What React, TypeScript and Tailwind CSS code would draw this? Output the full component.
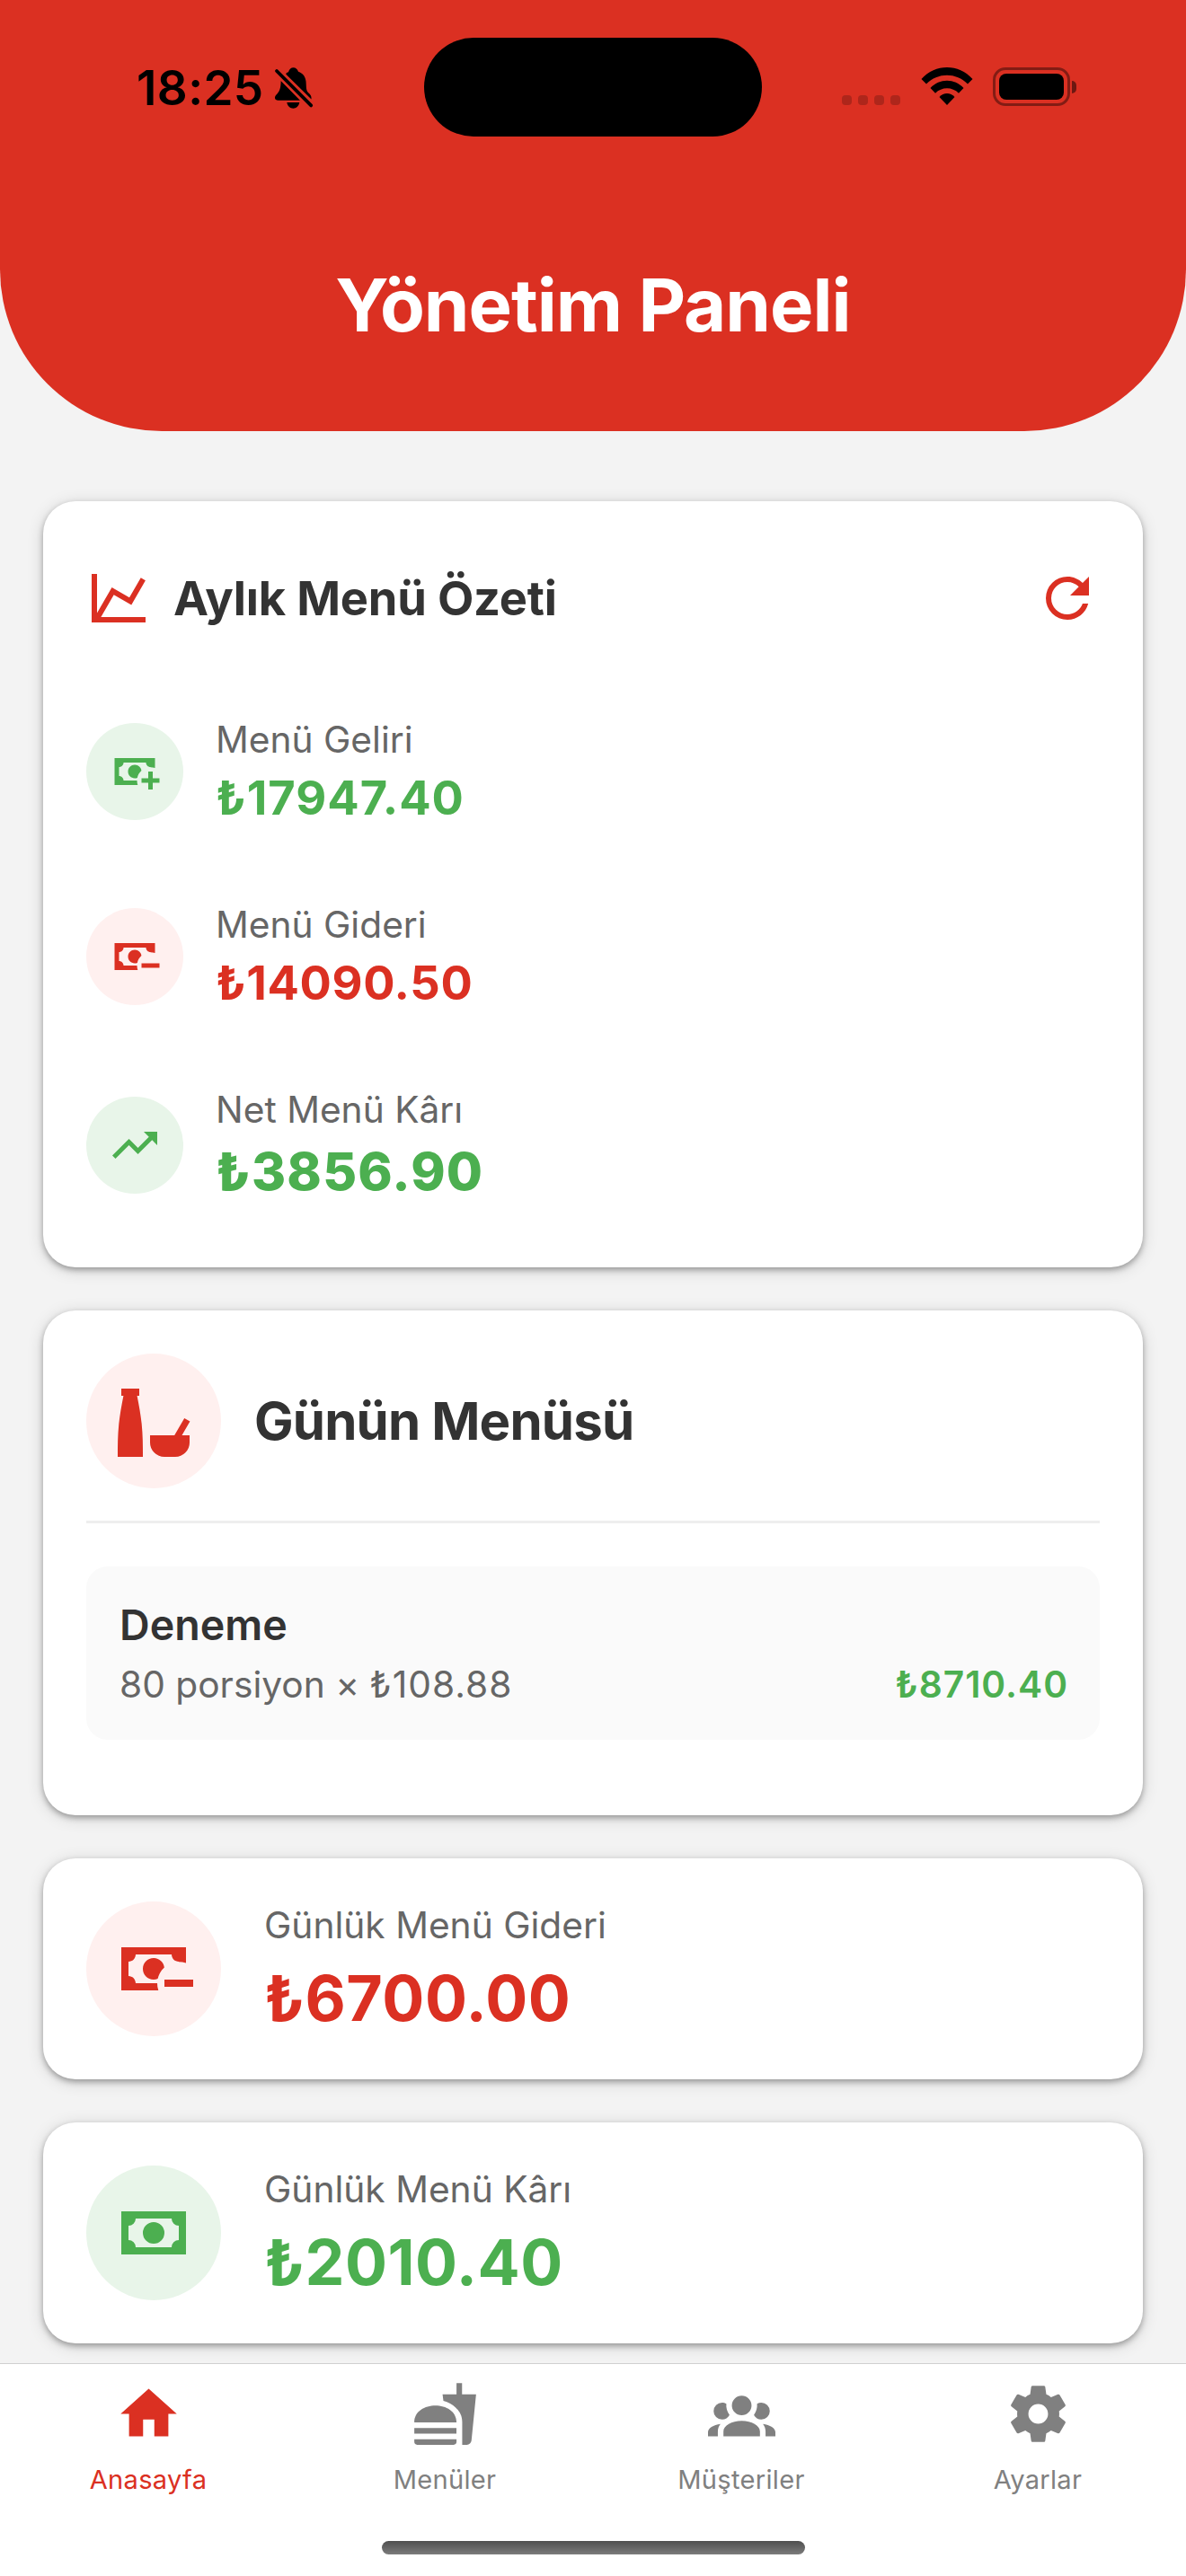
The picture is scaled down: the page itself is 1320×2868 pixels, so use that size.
import type { ReactNode } from "react";

const ICONS = {
  chart: "M16,11.78L20.24,4.45L21.97,5.45L16.74,14.5L10.23,10.75L5.46,19H22V21H2V3H4V17.54L9.5,8L16,11.78Z",
  refresh:
    "M17.65,6.35C16.2,4.9 14.21,4 12,4A8,8 0 0,0 4,12A8,8 0 0,0 12,20C15.73,20 18.84,17.45 19.73,14H17.65C16.83,16.33 14.61,18 12,18A6,6 0 0,1 6,12A6,6 0 0,1 12,6C13.66,6 15.14,6.69 16.22,7.78L13,11H20V4L17.65,6.35Z",
  cashPlus:
    "M15 15V17H18V20H20V17H23V15H20V12H18V15M14.97 11.61C14.85 10.28 13.59 8.97 12 9C10.3 9.03 9 10.3 9 12C9 13.7 10.3 14.94 12 15C12.38 15 12.77 14.92 13.14 14.77C13.41 13.67 13.86 12.63 14.97 11.61M13 16H7C7 14.9 6.1 14 5 14V10C6.1 10 7 9.1 7 8H17C17 9.1 17.9 10 19 10V10.06C19.67 10.06 20.34 10.18 21 10.4V6H3V18H13.32C13.1 17.33 13 16.66 13 16Z",
  cashMinus:
    "M15 15V17H23V15M14.97 11.61C14.85 10.28 13.59 8.97 12 9C10.3 9.03 9 10.3 9 12C9 13.7 10.3 14.94 12 15C12.38 15 12.77 14.92 13.14 14.77C13.41 13.67 13.86 12.63 14.97 11.61M13 16H7C7 14.9 6.1 14 5 14V10C6.1 10 7 9.1 7 8H17C17 9.1 17.9 10 19 10V10.06C19.67 10.06 20.34 10.18 21 10.4V6H3V18H13.32C13.1 17.33 13 16.66 13 16Z",
  cash: "M3,6H21V18H3V6M12,9A3,3 0 0,1 15,12A3,3 0 0,1 12,15A3,3 0 0,1 9,12A3,3 0 0,1 12,9M7,8A2,2 0 0,1 5,10V14A2,2 0 0,1 7,16H17A2,2 0 0,1 19,14V10A2,2 0 0,1 17,8H7Z",
  trending:
    "M16,6L18.29,8.29L13.41,13.17L9.41,9.17L2,16.59L3.41,18L9.41,12L13.41,16L19.71,9.71L22,12V6H16Z",
  bottleBowl:
    "M22,18A4,4 0 0,1 18,22H15A4,4 0 0,1 11,18V16H17.79L20.55,11.23L22.11,12.13L19.87,16H22V18M9,22H2C2,19 2,16 2.33,12.83C2.6,10.3 3.08,7.66 3.6,5H3V3H4L7,3H8V5H7.4C7.92,7.66 8.4,10.3 8.67,12.83C9,16 9,19 9,22Z",
  home: "M10,20V14H14V20H19V12H22L12,3L2,12H5V20H10Z",
  food: "M18.06 23H19.72C20.56 23 21.25 22.35 21.35 21.53L23 5.05H18V1H16.03V5.05H11.06L11.36 7.39C13.07 7.86 14.67 8.71 15.63 9.65C17.07 11.07 18.06 12.54 18.06 14.94V23M1 22V21H16.03V22C16.03 22.54 15.58 23 15 23H2C1.45 23 1 22.54 1 22M16.03 15C16.03 7 1 7 1 15H16.03M1 17H16V19H1V17Z",
  group:
    "M12,5.5A3.5,3.5 0 0,1 15.5,9A3.5,3.5 0 0,1 12,12.5A3.5,3.5 0 0,1 8.5,9A3.5,3.5 0 0,1 12,5.5M5,8C5.56,8 6.08,8.15 6.53,8.42C6.38,9.85 6.8,11.27 7.66,12.38C7.16,13.34 6.16,14 5,14A3,3 0 0,1 2,11A3,3 0 0,1 5,8M19,8A3,3 0 0,1 22,11A3,3 0 0,1 19,14C17.84,14 16.84,13.34 16.34,12.38C17.2,11.27 17.62,9.85 17.47,8.42C17.92,8.15 18.44,8 19,8M5.5,18.25C5.5,16.18 8.41,14.5 12,14.5C15.59,14.5 18.5,16.18 18.5,18.25V20H5.5V18.25M0,20V18.5C0,17.11 1.89,15.94 4.45,15.6C3.86,16.28 3.5,17.22 3.5,18.25V20H0M24,20H20.5V18.25C20.5,17.22 20.14,16.28 19.55,15.6C22.11,15.94 24,17.11 24,18.5V20Z",
  cog: "M12,15.5A3.5,3.5 0 0,1 8.5,12A3.5,3.5 0 0,1 12,8.5A3.5,3.5 0 0,1 15.5,12A3.5,3.5 0 0,1 12,15.5M19.43,12.97C19.47,12.65 19.5,12.33 19.5,12C19.5,11.67 19.47,11.34 19.43,11L21.54,9.37C21.73,9.22 21.78,8.95 21.66,8.73L19.66,5.27C19.54,5.05 19.27,4.96 19.05,5.05L16.56,6.05C16.04,5.66 15.5,5.32 14.87,5.07L14.5,2.42C14.46,2.18 14.25,2 14,2H10C9.75,2 9.54,2.18 9.5,2.42L9.13,5.07C8.5,5.32 7.96,5.66 7.44,6.05L4.95,5.05C4.73,4.96 4.46,5.05 4.34,5.27L2.34,8.73C2.21,8.95 2.27,9.22 2.46,9.37L4.57,11C4.53,11.34 4.5,11.67 4.5,12C4.5,12.33 4.53,12.65 4.57,12.97L2.46,14.63C2.27,14.78 2.21,15.05 2.34,15.27L4.34,18.73C4.46,18.95 4.73,19.03 4.95,18.95L7.44,17.94C7.96,18.34 8.5,18.68 9.13,18.93L9.5,21.58C9.54,21.82 9.75,22 10,22H14C14.25,22 14.46,21.82 14.5,21.58L14.87,18.93C15.5,18.67 16.04,18.34 16.56,17.94L19.05,18.95C19.27,19.03 19.54,18.95 19.66,18.73L21.66,15.27C21.78,15.05 21.73,14.78 21.54,14.63L19.43,12.97Z",
};

function Icon({ name, className }: { name: keyof typeof ICONS; className: string }) {
  return (
    <svg viewBox="0 0 24 24" fill="currentColor" fillRule="evenodd" className={`shrink-0 ${className}`}>
      <path d={ICONS[name]} />
    </svg>
  );
}

function Card({ className, children }: { className: string; children: ReactNode }) {
  return (
    <section
      className={`flex rounded-[36px] bg-white px-12 shadow-[0_3px_18px_rgba(0,0,0,0.15),0_3px_6px_rgba(0,0,0,0.3)] ${className}`}
    >
      {children}
    </section>
  );
}

function Badge({ name, tone, size }: { name: keyof typeof ICONS; tone: "green" | "red"; size: "sm" | "lg" }) {
  const color = tone === "green" ? "bg-[#e8f5e9] text-[#4caf50]" : "bg-[#fff0ef] text-[#db3022]";
  const box = size === "sm" ? "size-[108px]" : "size-[150px]";
  return (
    <div className={`flex shrink-0 items-center justify-center rounded-full ${color} ${box}`}>
      <Icon name={name} className={size === "sm" ? "size-[60px]" : "size-24"} />
    </div>
  );
}

function StatusBar() {
  return (
    <div className="flex h-[194px] items-start text-black">
      <div className="flex h-[194px] w-[472px] items-start pl-[152px]">
        <span className="mt-[68px] w-[153px] text-[53px] leading-[60px] font-semibold tracking-[0.4px] whitespace-nowrap">
          18:25
        </span>
        <svg viewBox="0 0 44 48" className="mt-[75px] h-12 w-11" fill="currentColor">
          <path d="M13.300 7.700C13.300 6 15 5.500 16 5.300C17 2 19 0.300 21.500 0.300S26 2 27 4.800C32 6.500 35 10.500 35.500 15.500C36 21 35.500 25 37.500 27.500C40 30 42 31.500 41.500 35.500Z" />
          <path d="M7.700 15L29 36.700H4.500C0.500 36.700 0 33 2.500 30.500C6 27 7.400 24 7.700 15Z" />
          <path d="M14.300 39H28.300C27.500 43.500 24.500 45.700 21.300 45.700S15 43.500 14.300 39Z" />
          <path d="M3 4L41.200 42.400" fill="none" stroke="#db3022" strokeWidth="8.500" />
          <path d="M3 4L41.200 42.400" fill="none" stroke="currentColor" strokeWidth="3.800" strokeLinecap="round" />
        </svg>
      </div>
      <div className="mt-[42px] h-[110px] w-[376px] rounded-[55px] bg-black" />
      <div className="mt-[75px] flex h-[43px] items-start pl-[89px]">
        <div className="mt-[31px] flex gap-[7px] opacity-20">
          <i className="h-[11px] w-[11px] rounded-[4px] bg-black" />
          <i className="h-[11px] w-[11px] rounded-[4px] bg-black" />
          <i className="h-[11px] w-[11px] rounded-[4px] bg-black" />
          <i className="h-[11px] w-[11px] rounded-[4px] bg-black" />
        </div>
        <svg viewBox="0 0 58 42" className="ml-[23px] h-[42px] w-[58px]" fill="currentColor">
          <path d="M0.500 13C16 -4.200 42 -4.200 57.500 13L52 18.600C39.500 5.500 18.500 5.500 6 18.600Z" />
          <path d="M10.500 23C20.500 12 37.500 12 47.500 23L42 28.700C35 21.300 23 21.300 16 28.700Z" />
          <path d="M20.500 33C25 27.800 33 27.800 37.500 33L29 42Z" />
        </svg>
        <div className="ml-[22px] flex h-[43px] w-[86px] rounded-[14px] border-[3px] border-black/40 p-1">
          <div className="flex-1 rounded-[8px] bg-black" />
        </div>
        <div className="mt-[15px] ml-[2px] h-[14px] w-[5px] rounded-r-[5px] bg-black/50" />
      </div>
    </div>
  );
}

function SummaryRow({
  icon,
  tone,
  label,
  value,
  valueClass,
  large,
}: {
  icon: keyof typeof ICONS;
  tone: "green" | "red";
  label: string;
  value: string;
  valueClass: string;
  large?: boolean;
}) {
  const color = tone === "green" ? "text-[#4caf50]" : "text-[#db3022]";
  const size = large
    ? "text-[58.200px] leading-[74px] font-extrabold"
    : "text-[52.400px] leading-[66px] font-bold";
  return (
    <div className={`flex items-center gap-9 ${large ? "h-[140px]" : "h-[132px]"}`}>
      <Badge name={icon} tone={tone} size="sm" />
      <div className="h-full whitespace-nowrap">
        <p className="text-[40.700px] leading-[62px] text-[#666]">{label}</p>
        <p className={`${size} ${color} ${valueClass}`}>{value}</p>
      </div>
    </div>
  );
}

function DailyCard({
  icon,
  tone,
  label,
  value,
}: {
  icon: keyof typeof ICONS;
  tone: "green" | "red";
  label: string;
  value: string;
}) {
  return (
    <Card className="h-[246px] items-start gap-12 pt-12">
      <Badge name={icon} tone={tone} size="lg" />
      <div className="-mt-1 whitespace-nowrap">
        <p className="text-[40.700px] leading-[62px] text-[#666]">{label}</p>
        <p
          className={`text-[69.800px] leading-[100px] font-bold tracking-[0.5px] ${tone === "green" ? "text-[#4caf50]" : "text-[#db3022]"}`}
        >
          {value}
        </p>
      </div>
    </Card>
  );
}

const TABS: { icon: keyof typeof ICONS; label: string; active?: boolean }[] = [
  { icon: "home", label: "Anasayfa", active: true },
  { icon: "food", label: "Menüler" },
  { icon: "group", label: "Müşteriler" },
  { icon: "cog", label: "Ayarlar" },
];

export default function App() {
  return (
    <div className="flex h-[2868px] w-[1320px] flex-col overflow-hidden bg-[#f3f3f3] font-['Inter',sans-serif]">
      <header className="h-[480px] shrink-0 rounded-b-[180px] bg-[#db3022]">
        <StatusBar />
        <h1 className="mt-[86px] text-center text-[81.400px] leading-[120px] font-bold tracking-[-1px] whitespace-nowrap text-white">
          Yönetim Paneli
        </h1>
      </header>

      <main className="flex h-[2151px] shrink-0 flex-col gap-12 px-12 pt-[78px]">
        <Card className="h-[853px] flex-col">
          <div className="mt-[72px] flex h-[72px] items-center">
            <Icon name="chart" className="size-[72px] text-[#db3022]" />
            <h2 className="ml-[25px] flex-1 text-[52.400px] leading-[72px] font-bold tracking-[-0.200px] whitespace-nowrap text-[#333]">
              Aylık Menü Özeti
            </h2>
            <Icon name="refresh" className="size-[72px] text-[#db3022]" />
          </div>
          <div className="mt-[91px] flex flex-col gap-[74px]">
            <SummaryRow
              icon="cashPlus"
              tone="green"
              label="Menü Geliri"
              value="₺17947.40"
              valueClass="tracking-[1px]"
            />
            <SummaryRow
              icon="cashMinus"
              tone="red"
              label="Menü Gideri"
              value="₺14090.50"
              valueClass="tracking-[0.600px]"
            />
            <SummaryRow
              icon="trending"
              tone="green"
              label="Net Menü Kârı"
              value="₺3856.90"
              valueClass="tracking-[1.200px]"
              large
            />
          </div>
        </Card>

        <Card className="h-[562px] flex-col pt-12">
          <div className="flex items-center gap-[37px] border-b-[3px] border-[#eee] pb-9">
            <Badge name="bottleBowl" tone="red" size="lg" />
            <h2 className="text-[58.200px] leading-[80px] font-bold tracking-[-0.850px] whitespace-nowrap text-[#333]">
              Günün Menüsü
            </h2>
          </div>
          <div className="mt-12 h-[193px] rounded-[24px] bg-[#fafafa] pt-9 pr-9 pl-[37px] whitespace-nowrap">
            <h3 className="text-[46.600px] leading-[58px] font-semibold text-[#333]">Deneme</h3>
            <div className="flex justify-between text-[40.700px] leading-[75px]">
              <span className="text-[#666]">
                80 porsiyon × <span className="tracking-[1px]">₺108.88</span>
              </span>
              <span className="-mr-px font-semibold tracking-[1px] text-[#4caf50]">₺8710.40</span>
            </div>
          </div>
        </Card>

        <DailyCard icon="cashMinus" tone="red" label="Günlük Menü Gideri" value="₺6700.00" />
        <DailyCard icon="cash" tone="green" label="Günlük Menü Kârı" value="₺2010.40" />
      </main>

      <nav className="flex h-[237px] shrink-0 flex-col items-center border-t border-[#d0d0d0] bg-white">
        <div className="grid w-full grid-cols-4 pt-[18px]">
          {TABS.map((tab) => (
            <div
              key={tab.label}
              className={`flex flex-col items-center gap-[17px] ${tab.active ? "text-[#db3022]" : "text-[#808080]"}`}
            >
              <Icon name={tab.icon} className="size-[75px]" />
              <span className="text-[29.100px] leading-[37px] tracking-[0.300px] whitespace-nowrap">{tab.label}</span>
            </div>
          ))}
        </div>
        <div className="mt-[50px] h-[15px] w-[471px] rounded-full bg-linear-to-b from-[#4f4f4f] to-[#7c7c7c]" />
      </nav>
    </div>
  );
}
